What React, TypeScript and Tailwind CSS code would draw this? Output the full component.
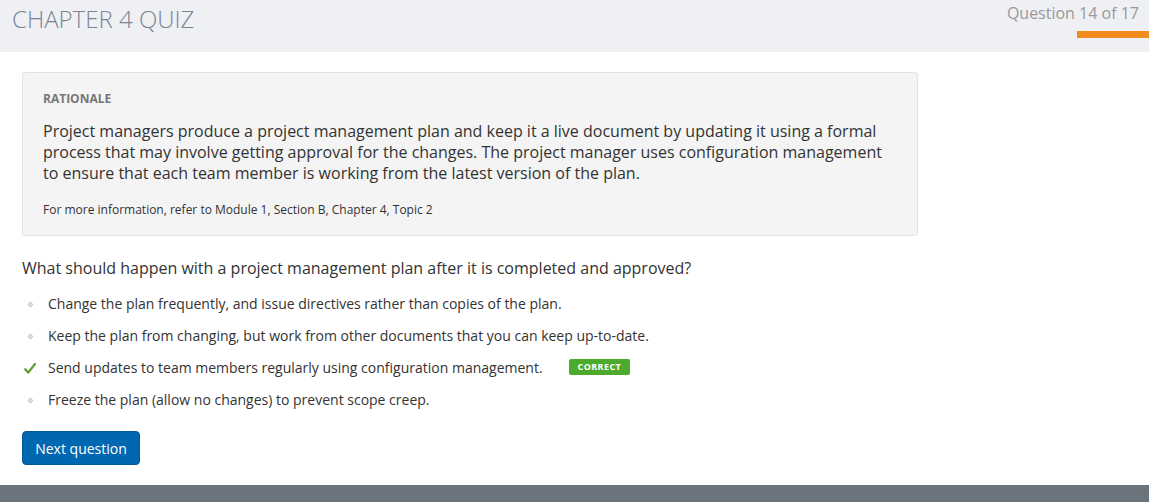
import React from "react";

const options = [
  { text: "Change the plan frequently, and issue directives rather than copies of the plan.", correct: false },
  { text: "Keep the plan from changing, but work from other documents that you can keep up-to-date.", correct: false },
  { text: "Send updates to team members regularly using configuration management.", correct: true },
  { text: "Freeze the plan (allow no changes) to prevent scope creep.", correct: false },
];

function Diamond() {
  return (
    <svg width="7" height="7" viewBox="0 0 7 7" className="block">
      <path d="M3.5 0.5 L6.5 3.5 L3.5 6.5 L0.5 3.5 Z" fill="#c8c8c8" />
      <path d="M3.5 2 L5 3.5 L3.5 5 L2 3.5 Z" fill="#e6e6e6" />
    </svg>
  );
}

function Check() {
  return (
    <svg width="12" height="11" viewBox="0 0 12 11" className="block">
      <path d="M1.2 6.2 L4.2 9.6 L11 1" fill="none" stroke="#5c9e2c" strokeWidth="2.2" strokeLinecap="round" strokeLinejoin="round" />
    </svg>
  );
}

export default function App() {
  return (
    <div className="w-[1149px] h-[502px] bg-white flex flex-col overflow-hidden" style={{ fontFamily: '"Open Sans", sans-serif' }}>
      <header className="h-[52px] bg-[#eff0f4] flex justify-between shrink-0">
        <h1 className="pl-[12px] pt-[3px] text-[24px] leading-[32px] font-light text-[#7a8594]">CHAPTER 4 QUIZ</h1>
        <div className="flex flex-col items-end">
          <div className="pr-[10px] pt-[2px] text-[16px] leading-[22px] text-[#999]">Question 14 of 17</div>
          <div className="mt-[7px] w-[72px] h-[7px] bg-[#f28c1e]" />
        </div>
      </header>
      <main className="flex-1 pl-[22px] pt-[20px]">
        <section className="w-[896px] h-[164px] bg-[#f4f4f4] border border-[#e2e2e2] rounded-[3px] px-[20px] pt-[18px]">
          <div className="text-[12px] leading-[16px] font-bold text-[#777]">RATIONALE</div>
          <p className="mt-[14px] text-[16px] leading-[21px] text-[#333] w-[850px]">
            Project managers produce a project management plan and keep it a live document by updating it using a formal process that may involve getting approval for the changes. The project manager uses configuration management to ensure that each team member is working from the latest version of the plan.
          </p>
          <p className="mt-[18px] text-[12px] leading-[16px] text-[#333]">For more information, refer to Module 1, Section B, Chapter 4, Topic 2</p>
        </section>
        <p className="mt-[21px] text-[16px] leading-[22px] text-[#333]">What should happen with a project management plan after it is completed and approved?</p>
        <ul className="mt-[15px] flex flex-col gap-[12px]">
          {options.map((o) => (
            <li key={o.text} className="flex items-center h-[20px]">
              <span className="w-[26px] flex items-center pl-[2px]">{o.correct ? <Check /> : <span className="pl-[3px]"><Diamond /></span>}</span>
              <span className="text-[14px] leading-[20px] text-[#333]">{o.text}</span>
              {o.correct && (
                <span className="ml-[26px] -mt-[2px] h-[16px] px-[9px] rounded-[2px] bg-[#4caa2c] text-white text-[9px] font-bold tracking-[0.4px] leading-[16px]">CORRECT</span>
              )}
            </li>
          ))}
        </ul>
        <button className="mt-[21px] h-[34px] w-[118px] rounded-[4px] bg-[#0068b0] border border-[#005a99] text-white text-[14px] font-medium">Next question</button>
      </main>
      <footer className="h-[17px] bg-[#6b747c] shrink-0" />
    </div>
  );
}
